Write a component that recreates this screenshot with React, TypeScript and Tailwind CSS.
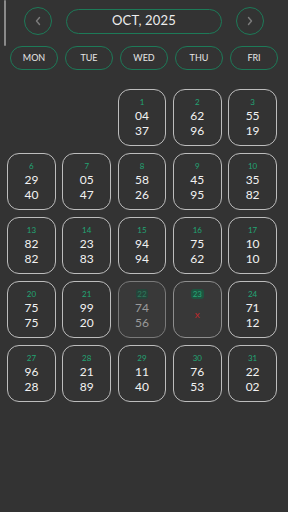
import React from "react";

type Cell = { d: number; a: string; b: string; state?: "dim" | "x" };

const rows: (Cell | null)[][] = [
  [null, null, { d: 1, a: "04", b: "37" }, { d: 2, a: "62", b: "96" }, { d: 3, a: "55", b: "19" }],
  [{ d: 6, a: "29", b: "40" }, { d: 7, a: "05", b: "47" }, { d: 8, a: "58", b: "26" }, { d: 9, a: "45", b: "95" }, { d: 10, a: "35", b: "82" }],
  [{ d: 13, a: "82", b: "82" }, { d: 14, a: "23", b: "83" }, { d: 15, a: "94", b: "94" }, { d: 16, a: "75", b: "62" }, { d: 17, a: "10", b: "10" }],
  [{ d: 20, a: "75", b: "75" }, { d: 21, a: "99", b: "20" }, { d: 22, a: "74", b: "56", state: "dim" }, { d: 23, a: "", b: "", state: "x" }, { d: 24, a: "71", b: "12" }],
  [{ d: 27, a: "96", b: "28" }, { d: 28, a: "21", b: "89" }, { d: 29, a: "11", b: "40" }, { d: 30, a: "76", b: "53" }, { d: 31, a: "22", b: "02" }],
];

function DayCell({ c }: { c: Cell }) {
  if (c.state === "x") {
    return (
      <div className="h-[57px] rounded-[12px] border border-[#8e8e8e] bg-[#383838] flex flex-col items-center pt-[7px]">
        <span className="text-[8px] leading-[10px] text-[#27a878] bg-[#1d5540] rounded-[3px] px-[2px]">{c.d}</span>
        <span className="mt-[9px] text-[10px] leading-[12px] text-[#c0282c]">x</span>
      </div>
    );
  }
  const dim = c.state === "dim";
  return (
    <div
      className={
        dim
          ? "h-[57px] rounded-[12px] border border-[#7a7a7a] bg-[#393939] flex flex-col items-center pt-[7px]"
          : "h-[57px] rounded-[12px] border border-[#bdbdbd] flex flex-col items-center pt-[7px]"
      }
    >
      <span
        className={
          dim
            ? "text-[8px] leading-[10px] text-[#2f7a5c] bg-[#24453a] rounded-[3px] px-[1px]"
            : "text-[8px] leading-[10px] text-[#22a574]"
        }
      >
        {c.d}
      </span>
      <span className={dim ? "text-[12px] leading-[15px] mt-[1px] text-[#9a9a9a]" : "text-[12px] leading-[15px] mt-[1px] text-[#f2f2f2]"}>{c.a}</span>
      <span className={dim ? "text-[12px] leading-[15px] mt-[0px] text-[#9a9a9a]" : "text-[12px] leading-[15px] mt-[0px] text-[#f2f2f2]"}>{c.b}</span>
    </div>
  );
}

export default function App() {
  return (
    <div
      className="relative w-[288px] h-[512px] bg-[#333333] overflow-hidden"
      style={{ fontFamily: "Lato, 'Noto Sans', sans-serif" }}
    >
      <div className="absolute left-[4px] top-0 w-[2px] h-[46px] bg-[#8a8a8a] rounded-full" />

      <div className="flex items-center pt-[7px] pl-[24px] pr-[24px] gap-[14px]">
        <div className="w-[28px] h-[28px] rounded-full border border-[#1d7a58] flex items-center justify-center shrink-0">
          <svg width="8" height="10" viewBox="0 0 8 10">
            <path d="M5.5 1.5 L2.5 5 L5.5 8.5" fill="none" stroke="#7c7c7c" strokeWidth="1.4" strokeLinecap="round" strokeLinejoin="round" />
          </svg>
        </div>
        <div className="flex-1 h-[25px] rounded-full border border-[#1d7a58] flex items-center justify-center text-[13px] text-[#ededed] tracking-[0.2px]">
          OCT, 2025
        </div>
        <div className="w-[28px] h-[28px] rounded-full border border-[#1d7a58] flex items-center justify-center shrink-0">
          <svg width="8" height="10" viewBox="0 0 8 10">
            <path d="M2.5 1.5 L5.5 5 L2.5 8.5" fill="none" stroke="#7c7c7c" strokeWidth="1.4" strokeLinecap="round" strokeLinejoin="round" />
          </svg>
        </div>
      </div>

      <div className="grid grid-cols-5 gap-[7px] pl-[10px] pr-[10px] mt-[11px]">
        {["MON", "TUE", "WED", "THU", "FRI"].map((d) => (
          <div key={d} className="h-[24px] rounded-full border border-[#1d7a58] flex items-center justify-center text-[9px] text-[#e6e6e6]">
            {d}
          </div>
        ))}
      </div>

      <div className="flex flex-col gap-[7px] pl-[7px] pr-[11px] mt-[19px]">
        {rows.map((r, i) => (
          <div key={i} className="grid grid-cols-5 gap-[6.5px]">
            {r.map((c, j) => (c ? <DayCell key={j} c={c} /> : <div key={j} />))}
          </div>
        ))}
      </div>
    </div>
  );
}
